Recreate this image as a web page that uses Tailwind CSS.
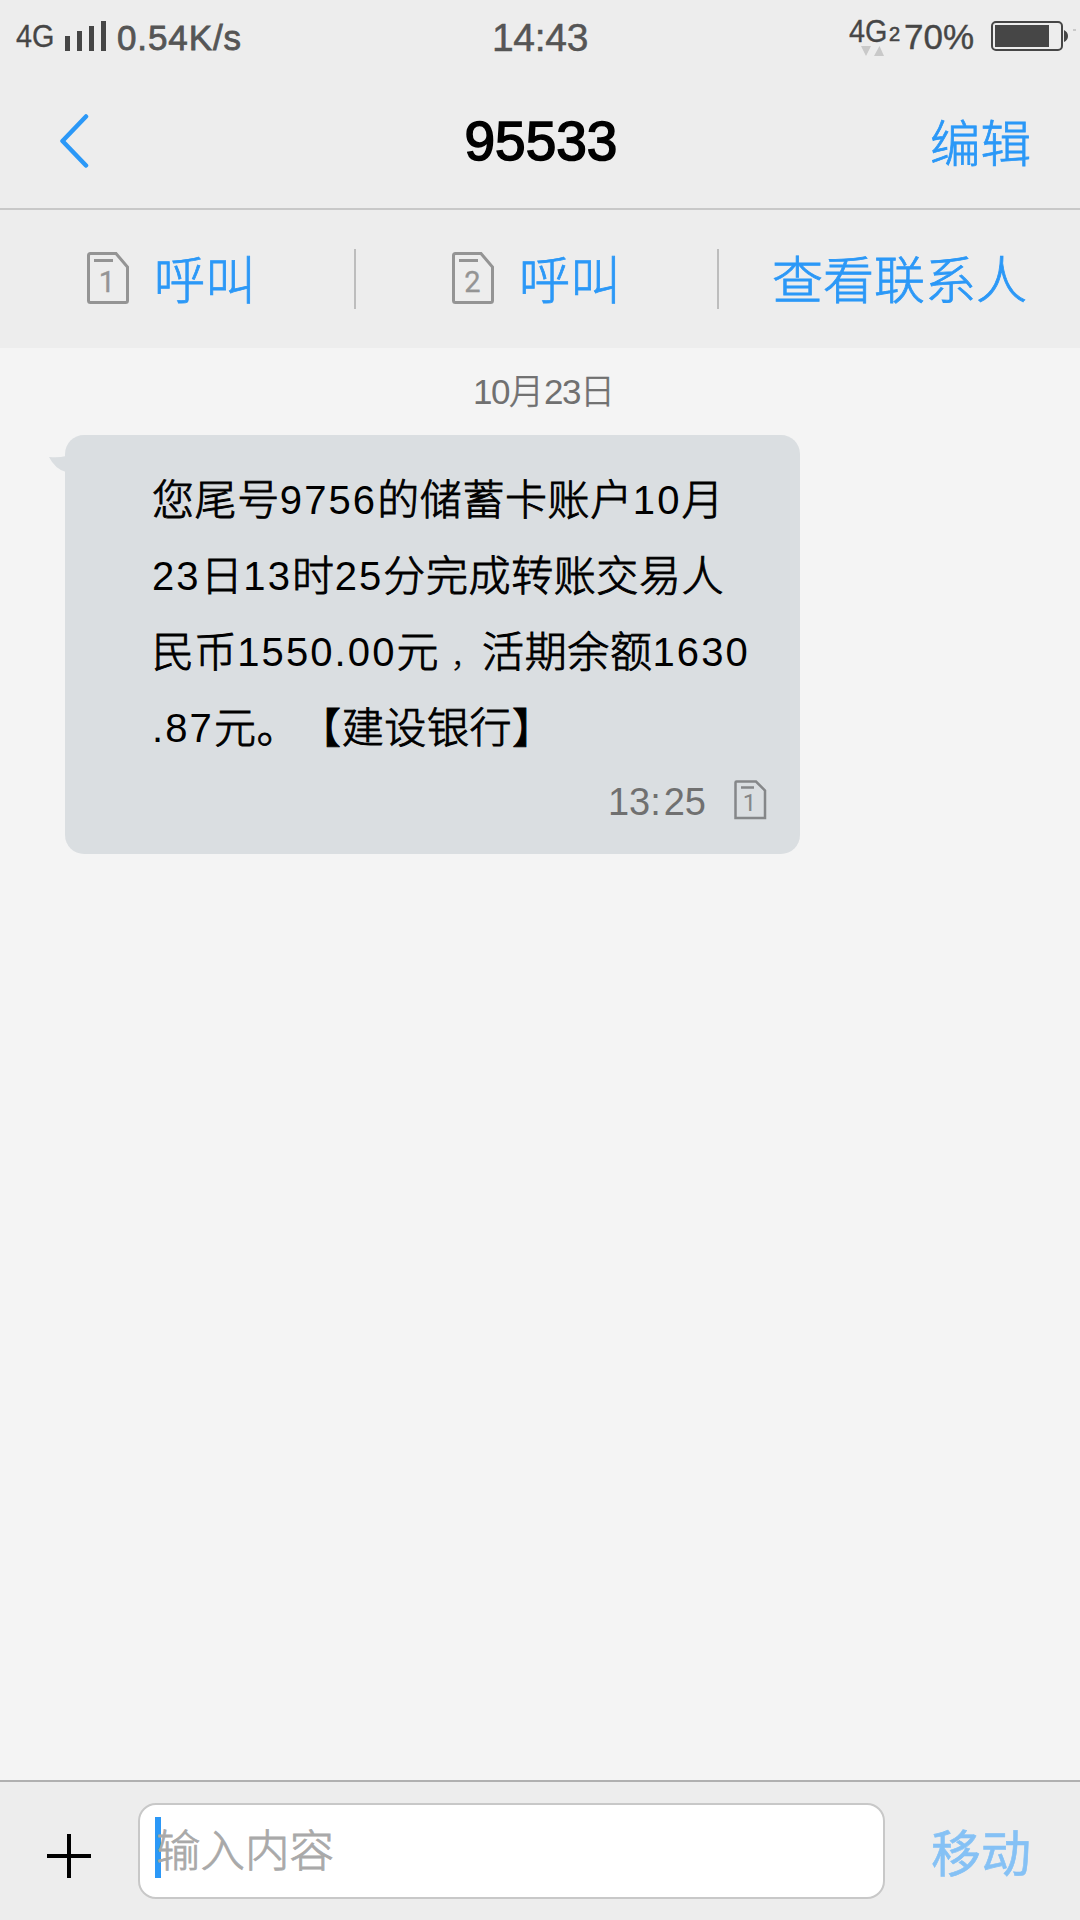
<!DOCTYPE html>
<html lang="zh-CN">
<head>
<meta charset="utf-8">
<title>95533</title>
<script src="https://cdn.jsdelivr.net/npm/@tailwindcss/browser@4"></script>
</head>
<body class="w-[1080px] h-[1920px] overflow-hidden flex flex-col bg-[#f4f4f4] font-['Liberation_Sans','Noto_Sans_CJK_SC',sans-serif] whitespace-nowrap">
<!-- status bar -->
<header class="h-[210px] shrink-0 bg-[#ededed] border-b-2 border-[#c8c8c8] flex flex-col">
  <div class="h-[74px] grid grid-cols-3 text-[#464646]">
    <div class="flex items-start pl-4">
      <span class="w-[49px] text-[32px] leading-[36px] origin-left scale-x-90 mt-[18px] [-webkit-text-stroke:0.3px]">4G</span>
      <svg class="w-[42px] h-[30px] mt-[21px]" viewBox="0 0 42 30" fill="#464646"><path d="M0 15h5v15H0zM12 10h5v20h-5zM24 5h5v25h-5zM36 0h5v30h-5z"/></svg>
      <span class="ml-[10px] text-[35px] leading-[40px] tracking-[0.9px] mt-[18px] text-[#555] [-webkit-text-stroke:0.8px]">0.54K/s</span>
    </div>
    <div class="text-center text-[39px] leading-[46px] mt-[15px] tracking-[-0.3px] text-[#555] [-webkit-text-stroke:0.5px]">14:43</div>
    <div class="flex items-start pl-[129px]">
      <div class="w-[40px] mt-[13px]">
        <div class="text-[32px] leading-[36px] origin-left scale-x-90 [-webkit-text-stroke:0.3px]">4G</div>
        <svg class="w-[24px] h-[10px] ml-[12px] -mt-[3px]" viewBox="0 0 24 10" fill="#c9c9c9"><path d="M0 0h10L5 10zM13 10h10L18.500 0z"/></svg>
      </div>
      <span class="w-[15px] text-[20px] leading-[22px] mt-[23px] [-webkit-text-stroke:0.6px]">2</span>
      <span class="w-[87px] text-[35px] leading-[40px] mt-[17px] [-webkit-text-stroke:0.4px]">70%</span>
      <svg class="w-[86px] h-[30px] mt-[21px]" viewBox="0 0 86 30"><rect x="1" y="1" width="70" height="28" rx="4" fill="none" stroke="#464646" stroke-width="2"/><path d="M4 4h54v22H4zM73 9q4 2 4 6t-4 6z" fill="#464646"/><path d="M82 8h3v2h-3z" fill="#c9c9c9"/></svg>
    </div>
  </div>
  <!-- title bar -->
  <div class="flex-1 grid grid-cols-3 items-start">
    <svg class="w-[30px] h-[56px] ml-[59px] mt-[39px]" viewBox="0 0 30 56" fill="none" stroke="#2b98f7" stroke-width="4.500" stroke-linecap="round" stroke-linejoin="round"><path d="M27 3.500L3.500 28L27 52.500"/></svg>
    <h1 class="pl-[2px] text-center text-[55px] leading-[62px] mt-[36px] text-black [-webkit-text-stroke:1.600px]">95533</h1>
    <div class="text-right pr-[49px] text-[50.500px] leading-[60px] mt-[41px] text-[#2b98f7] font-light [-webkit-text-stroke:0.8px]">编辑</div>
  </div>
</header>
<!-- quick actions -->
<nav class="h-[138px] shrink-0 bg-[#ededed] flex items-start pt-[39px] text-[51px] leading-[60px] text-[#2b98f7] font-light">
  <div class="w-[356px] h-[60px] border-r-2 border-[#bdbdbd] flex pl-[87px]">
    <svg class="w-[42px] h-[52px] mt-[3px]" viewBox="0 0 42 52" fill="none" stroke="#949494" stroke-width="3"><path d="M3.500 1.500H29L40.500 15V48.500Q40.500 50.500 38.500 50.500H3.500Q1.500 50.500 1.500 48.500V3.500Q1.500 1.500 3.500 1.500ZM7 8.500H26"/><text x="20" y="40" text-anchor="middle" font-size="29" fill="#949494" stroke="#949494" stroke-width=".3" font-family="Roboto" font-weight="400">1</text></svg>
    <span class="ml-[25px] mt-[3px] [-webkit-text-stroke:0.8px]">呼叫</span>
  </div>
  <div class="w-[363px] h-[60px] border-r-2 border-[#bdbdbd] flex pl-[96px]">
    <svg class="w-[42px] h-[52px] mt-[3px]" viewBox="0 0 42 52" fill="none" stroke="#949494" stroke-width="3"><path d="M3.500 1.500H29L40.500 15V48.500Q40.500 50.500 38.500 50.500H3.500Q1.500 50.500 1.500 48.500V3.500Q1.500 1.500 3.500 1.500ZM7 8.500H26"/><text x="20.5" y="40" text-anchor="middle" font-size="29" fill="#949494" stroke="#949494" stroke-width=".3" font-family="Roboto" font-weight="400">2</text></svg>
    <span class="ml-[25px] mt-[3px] [-webkit-text-stroke:0.8px]">呼叫</span>
  </div>
  <span class="ml-[53px] mt-[3px] [-webkit-text-stroke:0.8px]">查看联系人</span>
</nav>
<!-- conversation -->
<main class="flex-1 flex flex-col">
  <div class="h-[87px] pt-[22px] pl-[473px] text-[35px] leading-[44px] text-[#707070] flex font-light [-webkit-text-stroke:0.6px]"><span class="tracking-[-1.500px] [-webkit-text-stroke:0px]">10</span>月<span class="tracking-[-1.500px] [-webkit-text-stroke:0px]">23</span>日</div>
  <section class="relative ml-[65px] w-[735px] h-[419px] rounded-[19px] bg-[#dadee1] text-[42px] leading-[76px] text-black">
    <svg class="absolute -left-[16px] top-[21px] w-[17px] h-[16px]" viewBox="0 0 17 16" fill="#dadee1"><path d="M0 1Q10 2 17 0V16Q6 13 0 1Z"/></svg>
    <div class="pt-[28px] pl-[87px] font-light tracking-[0.6px] [-webkit-text-stroke:0.9px] [text-spacing-trim:space-all]">
      <p class="h-[76px]">您尾号<span class="relative -top-px text-[40px] tracking-[2.100px] [-webkit-text-stroke:0px]">9756</span>的储蓄卡账户<span class="relative -top-px text-[40px] tracking-[2.100px] [-webkit-text-stroke:0px]">10</span>月</p>
      <p class="h-[76px]"><span class="relative -top-px text-[40px] tracking-[2.100px] [-webkit-text-stroke:0px]">23</span>日<span class="relative -top-px text-[40px] tracking-[2.100px] [-webkit-text-stroke:0px]">13</span>时<span class="relative -top-px text-[40px] tracking-[2.100px] [-webkit-text-stroke:0px]">25</span>分完成转账交易人</p>
      <p class="h-[76px]">民币<span class="relative -top-px text-[40px] tracking-[2.100px] [-webkit-text-stroke:0px]">1550.00</span>元<span class="inline-block w-[43px] pl-[12px] text-[30px] tracking-normal [-webkit-text-stroke:0.4px]">，</span>活期余额<span class="relative -top-px text-[40px] tracking-[2.100px] [-webkit-text-stroke:0px]">1630</span></p>
      <p class="h-[76px]"><span class="relative -top-px text-[40px] tracking-[2.100px] [-webkit-text-stroke:0px]">.87</span>元。【建设银行】</p>
    </div>
    <div class="flex justify-end pr-[33px] pt-[12px] text-[#707070]">
      <span class="text-[38px] leading-[46px] mr-[28px]">13<span class="mr-[3px]">:</span>25</span>
      <svg class="w-[33px] h-[40px] mt-px" viewBox="0 0 33 40" fill="none" stroke="#858789" stroke-width="2.500"><path d="M2.500 1.500H22L31 10.500V38H1.500V2.500Q1.500 1.500 2.500 1.500ZM7 7.500H20"/><text x="15.500" y="30.500" text-anchor="middle" font-size="24" fill="#858789" stroke="none" font-family="Roboto">1</text></svg>
    </div>
  </section>
</main>
<!-- composer -->
<footer class="h-[140px] shrink-0 bg-[#ededed] border-t-2 border-[#b0b0b0] flex items-start">
  <svg class="w-[44px] h-[44px] ml-[47px] mt-[52px]" viewBox="0 0 44 44" fill="#000"><path d="M20 0h4v20h20v4H24v20h-4V24H0v-4h20z"/></svg>
  <div class="relative ml-[47px] mt-[21px] w-[747px] h-[96px] rounded-[18px] border-2 border-[#c8c8c8] bg-white pl-[16px] text-[44.500px] leading-[93px] text-[#a9a9a9] font-light">
    <i class="absolute left-[15px] top-[12px] w-[6px] h-[61px] bg-[#2b98f7]"></i>
    <span class="relative [-webkit-text-stroke:0.8px]">输入内容</span>
  </div>
  <span class="ml-[46px] mt-[43px] text-[50px] leading-[60px] text-[#85c1f5] [-webkit-text-stroke:0.6px]">移动</span>
</footer>
</body>
</html>
